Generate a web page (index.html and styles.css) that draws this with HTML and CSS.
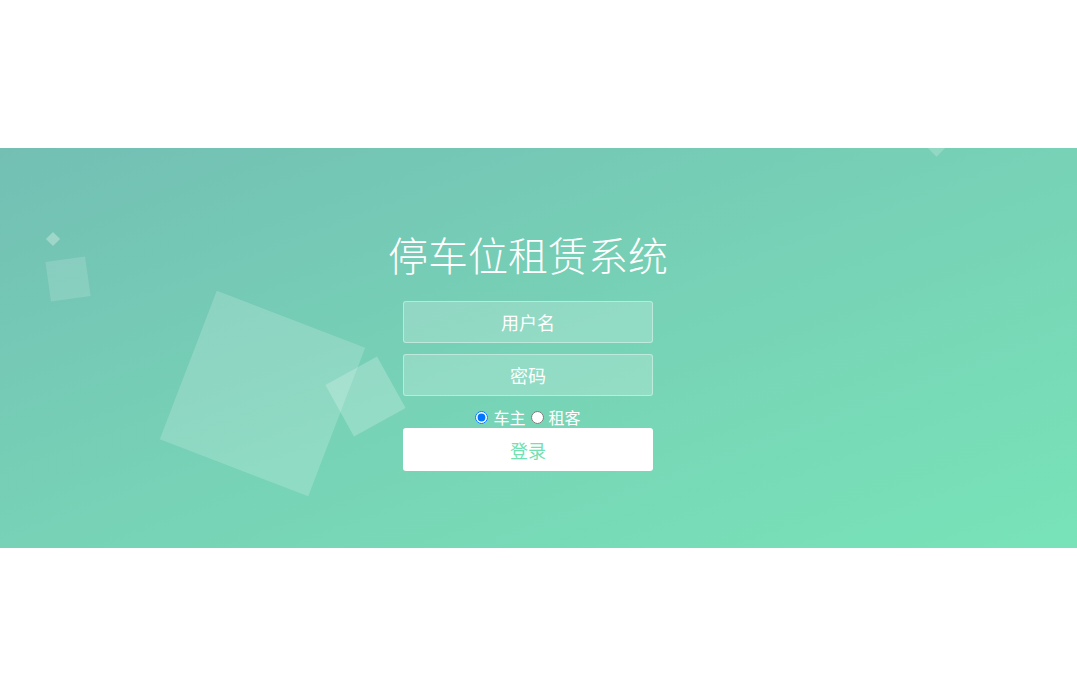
FILE: index.html
```html
<!DOCTYPE html>
<html lang="zh-CN">
<head>
<meta charset="utf-8">
<title>停车位租赁系统</title>
<link rel="stylesheet" href="styles.css">
</head>
<body>
<div class="wrapper">
  <div class="bubble b-diamond"></div>
  <div class="bubble b-small"></div>
  <div class="bubble b-big"></div>
  <div class="bubble b-medium"></div>
  <div class="bubble b-top"></div>
  <div class="container">
    <h1 class="title">停车位租赁系统</h1>
    <form class="form">
      <input class="field" type="text" placeholder="用户名">
      <input class="field" type="password" placeholder="密码">
      <div class="roles">
        <label class="role"><input class="radio" type="radio" name="role" checked>车主</label>
        <label class="role"><input class="radio" type="radio" name="role">租客</label>
      </div>
      <button class="submit" type="button">登录</button>
    </form>
  </div>
</div>
</body>
</html>
```

FILE: styles.css
```css
* {
  box-sizing: border-box;
}

body {
  margin: 0;
  background: #ffffff;
  font-family: "Noto Sans CJK SC", "Noto Sans", sans-serif;
  min-height: 700px;
}

.wrapper {
  position: relative;
  margin-top: 148px;
  height: 400px;
  overflow: hidden;
  background: linear-gradient(to bottom right, #73bfb4 0%, #77d2b6 50%, #78e3b8 100%);
}

.container {
  position: relative;
  z-index: 2;
  width: 600px;
  margin-left: calc(50% - 310.5px);
  padding-top: 80px;
  text-align: center;
  color: #ffffff;
}

.title {
  margin: 0;
  font-size: 40px;
  line-height: 53px;
  font-weight: 300;
  color: #ffffff;
}

.form {
  display: flex;
  flex-direction: column;
  align-items: center;
  padding-top: 20px;
  margin: 0;
}

.field {
  display: block;
  width: 250px;
  height: 42px;
  margin: 0 0 11px;
  padding: 0 15px;
  border: 1px solid rgba(255, 255, 255, 0.4);
  border-radius: 3px;
  background: rgba(255, 255, 255, 0.2);
  color: #ffffff;
  font-family: inherit;
  font-size: 18px;
  text-align: center;
  outline: none;
}

.field::placeholder {
  color: #ffffff;
  opacity: 1;
}

.roles {
  display: flex;
  align-items: center;
  justify-content: center;
  height: 22px;
  margin-top: -1px;
  gap: 5px;
  font-size: 16px;
  line-height: 22px;
  color: #ffffff;
}

.role {
  display: flex;
  align-items: center;
  gap: 5px;
}

.radio {
  width: 13px;
  height: 13px;
  margin: 0;
}

.submit {
  width: 250px;
  height: 43px;
  padding: 0;
  border: 0;
  border-radius: 3px;
  background: #ffffff;
  color: #74dfb0;
  font-family: inherit;
  font-size: 18px;
  cursor: pointer;
}

.bubble {
  position: absolute;
  z-index: 1;
  background: rgba(255, 255, 255, 0.17);
}

.b-diamond {
  left: 48px;
  top: 86px;
  width: 10px;
  height: 10px;
  transform: rotate(45deg);
  background: rgba(255, 255, 255, 0.3);
}

.b-small {
  left: 48px;
  top: 111px;
  width: 40px;
  height: 40px;
  transform: rotate(-8deg);
  background: rgba(255, 255, 255, 0.15);
}

.b-big {
  left: 183px;
  top: 166px;
  width: 159px;
  height: 159px;
  transform: rotate(21deg);
  background: rgba(255, 255, 255, 0.18);
}

.b-medium {
  left: 336px;
  top: 219px;
  width: 59px;
  height: 59px;
  transform: rotate(-29deg);
  background: rgba(255, 255, 255, 0.22);
}

.b-top {
  left: 930px;
  top: -7px;
  width: 13px;
  height: 13px;
  transform: rotate(45deg);
  background: rgba(255, 255, 255, 0.2);
}
```
